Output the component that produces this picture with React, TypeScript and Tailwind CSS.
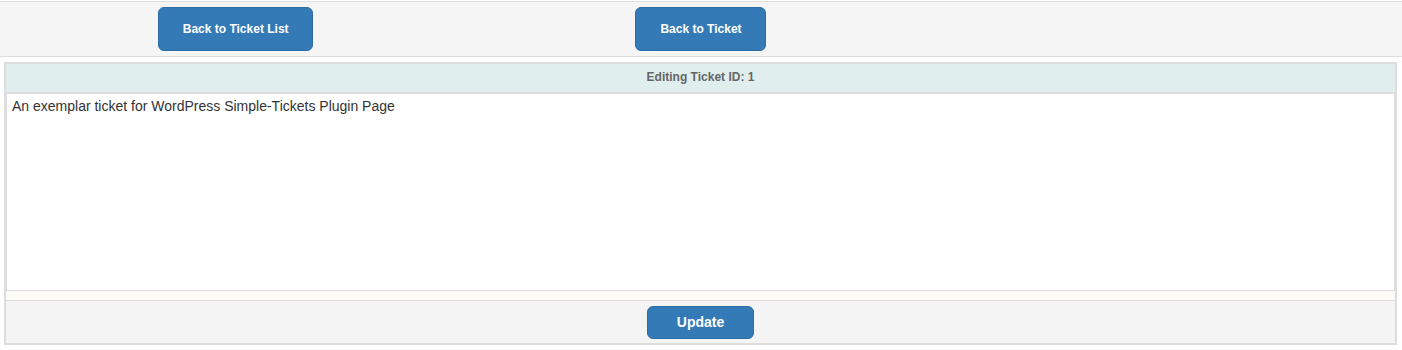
export default function App() {
  return (
    <div className="w-[1402px] h-[350px] bg-white font-['Liberation_Sans',Arial,sans-serif]">
      {/* Nav bar */}
      <div className="mt-px h-[56px] border-y border-[#dddddd] bg-[#f5f5f5] grid grid-cols-3 items-center">
        <div className="flex justify-center pl-[4px]">
          <button className="w-[155px] h-[44px] rounded-[6px] border border-[#2e6da4] bg-[#337ab7] text-white text-[12px] font-bold">
            Back to Ticket List
          </button>
        </div>
        <div className="flex justify-center">
          <button className="w-[131px] h-[44px] rounded-[6px] border border-[#2e6da4] bg-[#337ab7] text-white text-[12px] font-bold">
            Back to Ticket
          </button>
        </div>
        <div />
      </div>

      {/* Edit table */}
      <div className="mx-[4px] mt-[5px] w-[1393px] border-2 border-[#dddddd]">
        <div className="h-[30px] pb-[2px] bg-[#e0eeee] border-b-2 border-[#dddddd] flex items-center justify-center text-[12px] font-bold text-[#666666]">
          Editing Ticket ID: 1
        </div>
        <div className="h-[197px] bg-white border border-[#dddddd] border-t-0 px-[5px] pt-[3px] text-[14px] leading-[18px] text-[#333333]">
          An exemplar ticket for WordPress Simple-Tickets Plugin Page
        </div>
        <div className="h-[10px] bg-[#fcfbf6] border-b border-[#dddddd]" />
        <div className="h-[42px] bg-[#f4f4f4] flex items-center justify-center">
          <button className="w-[107px] h-[33px] rounded-[6px] border border-[#2e6da4] bg-[#337ab7] text-white text-[14px] font-bold">
            Update
          </button>
        </div>
      </div>
    </div>
  );
}
